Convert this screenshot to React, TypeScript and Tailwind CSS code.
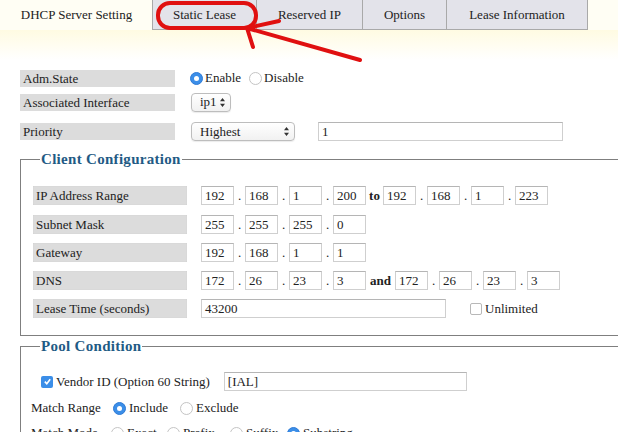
import React from 'react';

function Radio({ checked }: { checked?: boolean }) {
  return checked ? (
    <span className="inline-flex w-[13px] h-[13px] rounded-full bg-[#3b8ee8] border border-[#2f7bd6] items-center justify-center shrink-0">
      <span className="w-[5px] h-[5px] rounded-full bg-white" />
    </span>
  ) : (
    <span className="inline-block w-[13px] h-[13px] rounded-full bg-white border border-[#c4c4c4] shrink-0" />
  );
}

function Checkbox({ checked }: { checked?: boolean }) {
  return checked ? (
    <span className="inline-flex w-[12px] h-[12px] rounded-[2px] bg-[#3b8ee8] items-center justify-center shrink-0">
      <svg width="9" height="9" viewBox="0 0 10 10">
        <path d="M2 5.2 L4.2 7.4 L8 2.6" stroke="white" strokeWidth="1.8" fill="none" />
      </svg>
    </span>
  ) : (
    <span className="inline-block w-[12px] h-[12px] rounded-[2px] bg-white border border-[#b8b8b8] shrink-0" />
  );
}

function SelectBox({ value, width }: { value: string; width: string }) {
  return (
    <span className={`${width} h-[19px] flex items-center justify-between rounded-[4px] border border-[#bdbdbd] bg-gradient-to-b from-white to-[#f1f1f1] pl-2 pr-1 text-[13px] shadow-[0_1px_1px_rgba(0,0,0,0.08)]`}>
      <span>{value}</span>
      <svg width="7" height="11" viewBox="0 0 7 11">
        <path d="M3.5 1 L6 4.2 L1 4.2 Z M3.5 10 L6 6.8 L1 6.8 Z" fill="#333" />
      </svg>
    </span>
  );
}

function Box({ v, w = 'w-[33px]' }: { v: string; w?: string }) {
  return (
    <span className={`${w} block h-[19px] border border-[#cfcfcf] border-t-[#b5b5b5] bg-white pl-[3px] text-[13px] leading-[17px] shrink-0 overflow-hidden`}>
      {v}
    </span>
  );
}

function Ip({ parts }: { parts: string[] }) {
  return (
    <span className="flex items-center">
      {parts.map((p, i) => (
        <React.Fragment key={i}>
          {i > 0 && <span className="w-[11px] text-center text-[13px] leading-[19px]">.</span>}
          <Box v={p} />
        </React.Fragment>
      ))}
    </span>
  );
}

function Label({ text, w }: { text: string; w: string }) {
  return (
    <span className={`${w} h-[19px] bg-[#dcdcdc] pl-[3px] text-[13px] leading-[19px] shrink-0 shadow-[inset_0_0_1px_rgba(0,0,0,0.15)]`}>
      {text}
    </span>
  );
}

function Legend({ text }: { text: string }) {
  return (
    <legend className="ml-[19px] px-px text-[15px] font-bold tracking-[0.3px] text-[#1f5b85] leading-[16px]">{text}</legend>
  );
}

export default function App() {
  const tabs = ['Static Lease', 'Reserved IP', 'Options', 'Lease Information'];
  const tabW = ['w-[105px]', 'w-[107px]', 'w-[85px]', 'w-[142px]'];

  return (
    <div className="relative w-[618px] h-[432px] overflow-hidden bg-white text-[#222] font-['Liberation_Serif','DejaVu_Serif',serif]">
      {/* tab bar */}
      <div className="flex h-[30px] bg-[#fffef4]">
        <div className="w-[153px] flex items-center justify-center text-[13px] text-[#222]">DHCP Server Setting</div>
        {tabs.map((t, i) => (
          <div
            key={t}
            className={`${tabW[i]} flex items-center justify-center border-l border-r border-b border-[#a9a9a9] bg-[#e3e3ea] text-[13px] -ml-px first:ml-0`}
          >
            {t}
          </div>
        ))}
      </div>
      <div className="h-[30px] bg-gradient-to-b from-[#fffbe2] to-white" />

      {/* top rows */}
      <div className="pl-[20px] flex flex-col">
        <div className="flex items-center h-[16px] mt-[10px]">
          <span className="w-[155px] h-[17px] bg-[#dcdcdc] pl-[3px] text-[13px] leading-[17px]">Adm.State</span>
          <span className="ml-[15px] flex items-center gap-[2px] text-[13px]">
            <Radio checked />
            <span>Enable</span>
            <span className="ml-[6px] flex items-center gap-[2px]">
              <Radio />
              <span>Disable</span>
            </span>
          </span>
        </div>
        <div className="flex items-center h-[18px] mt-[7px]">
          <span className="w-[155px] h-[17px] bg-[#dcdcdc] pl-[3px] text-[13px] leading-[17px]">Associated Interface</span>
          <span className="ml-[16px]">
            <SelectBox value="ip1" width="w-[40px]" />
          </span>
        </div>
        <div className="flex items-center h-[19px] mt-[11px]">
          <span className="w-[155px] h-[17px] bg-[#dcdcdc] pl-[3px] text-[13px] leading-[17px]">Priority</span>
          <span className="ml-[16px]">
            <SelectBox value="Highest" width="w-[104px]" />
          </span>
          <span className="ml-[23px]">
            <Box v="1" w="w-[245px]" />
          </span>
        </div>
      </div>

      {/* Client configuration */}
      <fieldset className="ml-[20px] mt-[10px] w-[640px] h-[185px] border border-[#7f7f7f]">
        <Legend text="Client Configuration" />
        <div className="flex flex-col gap-[9px] mt-[19px] pl-[12px]">
          <div className="flex items-center">
            <Label text="IP Address Range" w="w-[154px]" />
            <span className="ml-[14px] flex items-center">
              <Ip parts={['192', '168', '1', '200']} />
              <span className="w-[17px] text-center text-[13px] font-bold">to</span>
              <Ip parts={['192', '168', '1', '223']} />
            </span>
          </div>
          <div className="flex items-center">
            <Label text="Subnet Mask" w="w-[154px]" />
            <span className="ml-[14px]">
              <Ip parts={['255', '255', '255', '0']} />
            </span>
          </div>
          <div className="flex items-center">
            <Label text="Gateway" w="w-[154px]" />
            <span className="ml-[14px]">
              <Ip parts={['192', '168', '1', '1']} />
            </span>
          </div>
          <div className="flex items-center">
            <Label text="DNS" w="w-[154px]" />
            <span className="ml-[14px] flex items-center">
              <Ip parts={['172', '26', '23', '3']} />
              <span className="w-[29px] text-center text-[13px] font-bold">and</span>
              <Ip parts={['172', '26', '23', '3']} />
            </span>
          </div>
          <div className="flex items-center">
            <Label text="Lease Time (seconds)" w="w-[154px]" />
            <span className="ml-[14px]">
              <Box v="43200" w="w-[245px]" />
            </span>
            <span className="ml-[24px] flex items-center gap-[3px] text-[13px]">
              <Checkbox />
              <span>Unlimited</span>
            </span>
          </div>
        </div>
      </fieldset>

      {/* Pool condition */}
      <fieldset className="ml-[20px] mt-[2px] w-[640px] h-[120px] border border-[#7f7f7f]">
        <Legend text="Pool Condition" />
        <div className="flex flex-col text-[13px] pl-[10px]">
          <div className="flex items-center mt-[18px] h-[19px]">
            <span className="ml-[10px] flex items-center gap-[3px]">
              <Checkbox checked />
              <span>Vendor ID (Option 60 String)</span>
            </span>
            <span className="ml-[14px]">
              <Box v="[IAL]" w="w-[243px]" />
            </span>
          </div>
          <div className="flex items-center mt-[9px] h-[16px]">
            <span className="w-[82px]">Match Range</span>
            <span className="flex items-center gap-[3px]">
              <Radio checked />
              <span>Include</span>
            </span>
            <span className="ml-[12px] flex items-center gap-[3px]">
              <Radio />
              <span>Exclude</span>
            </span>
          </div>
          <div className="flex items-center mt-[9px] h-[16px]">
            <span className="w-[80px]">Match Mode</span>
            <span className="flex items-center gap-[3px] w-[56px]">
              <Radio />
              <span>Exact</span>
            </span>
            <span className="flex items-center gap-[3px] w-[63px]">
              <Radio />
              <span>Prefix</span>
            </span>
            <span className="flex items-center gap-[3px] w-[57px]">
              <Radio />
              <span>Suffix</span>
            </span>
            <span className="flex items-center gap-[3px]">
              <Radio checked />
              <span>Substring</span>
            </span>
          </div>
        </div>
      </fieldset>

      {/* red annotation */}
      <svg className="absolute left-0 top-0 pointer-events-none" width="618" height="432">
        <rect x="158" y="3" width="98" height="25" rx="12" fill="none" stroke="#e01010" strokeWidth="4" />
        <path d="M360 60 L247 28 M247 28 L279 21 M247 28 L253 47" stroke="#e01010" strokeWidth="4" fill="none" strokeLinecap="round" />
      </svg>
    </div>
  );
}
